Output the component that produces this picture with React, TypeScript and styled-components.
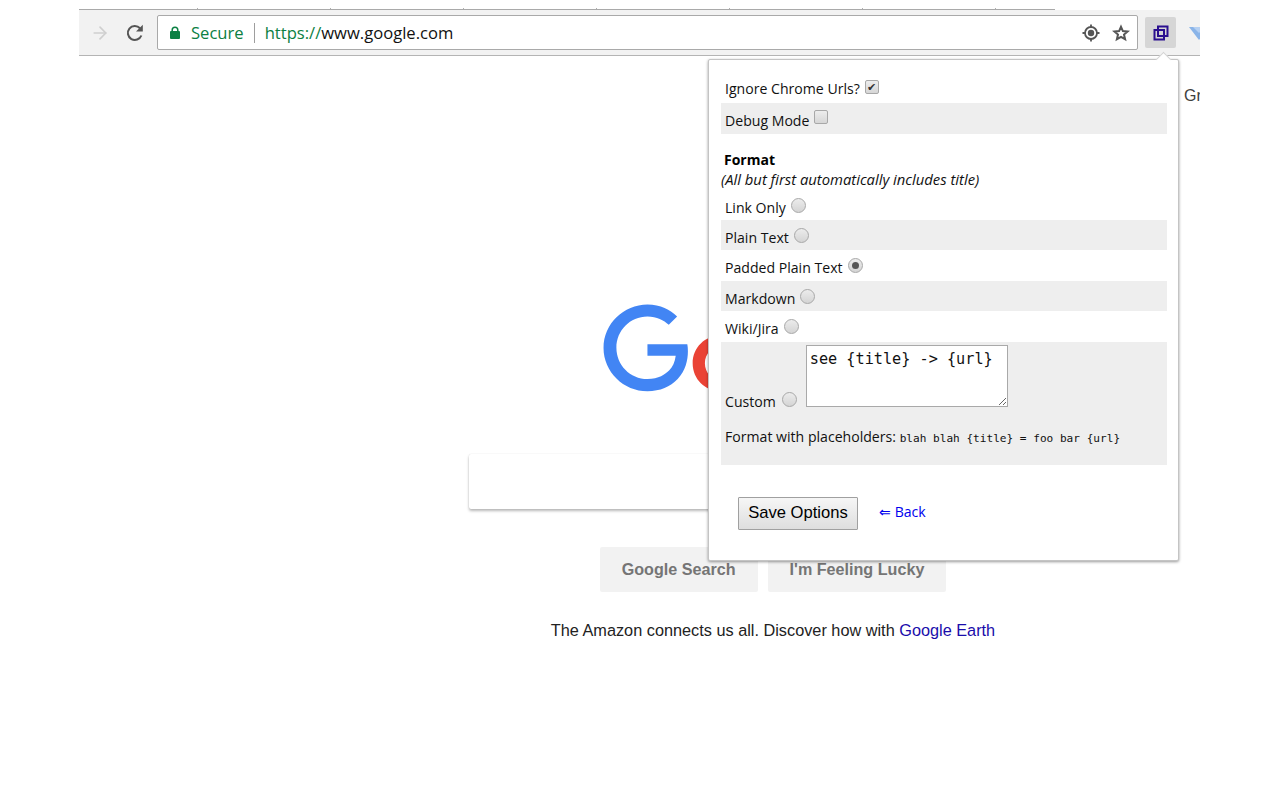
import React from 'react';
import styled, { createGlobalStyle } from 'styled-components';
import { ArrowRight } from 'lucide-react';

const GlobalStyle = createGlobalStyle`
  html, body {
    margin: 0;
    padding: 0;
    background: #ffffff;
    overflow: hidden;
  }
`;

const uiFont = `"Open Sans", "Noto Sans", sans-serif`;
const monoFont = `"DejaVu Sans Mono", "Liberation Mono", monospace`;

const Frame = styled.div`
  position: relative;
  width: 1121px;
  height: 800px;
  margin-left: 79px;
  overflow: hidden;
  background: #ffffff;
  font-family: "Liberation Sans", Arial, sans-serif;
`;

const TabStrip = styled.div`
  width: 976px;
  height: 10px;
  border-bottom: 1px solid #a9a9a9;
  display: flex;
  align-items: flex-end;
  padding-left: 118px;
  gap: 132px;
  box-sizing: border-box;
`;

const TabTick = styled.span`
  width: 1px;
  height: 1px;
  background: #b0b0b0;
`;

const Toolbar = styled.div`
  height: 46px;
  background: #f2f2f2;
  border-bottom: 1px solid #b4b4b4;
  box-sizing: border-box;
  display: flex;
  align-items: center;
`;

const NavButton = styled.div`
  width: 35px;
  height: 32px;
  margin-left: 3px;
  margin-right: -3px;
  display: flex;
  align-items: center;
  justify-content: center;
  flex: none;
`;

const Omnibox = styled.div`
  width: 981px;
  height: 35px;
  flex: none;
  margin-left: 8px;
  box-sizing: border-box;
  background: #ffffff;
  border: 1px solid #a9a9a9;
  border-radius: 2px;
  display: flex;
  align-items: center;
  padding: 0 7px 0 11px;
  font-family: ${uiFont};
  font-size: 16.6px;
`;

const SecureLabel = styled.span`
  color: #0b8043;
  margin-left: 10px;
`;

const Divider = styled.span`
  width: 1px;
  height: 20px;
  background: #9e9e9e;
  margin: 0 10px 0 10px;
`;

const Scheme = styled.span`
  color: #0b8043;
`;

const Host = styled.span`
  color: #111111;
`;

const OmniIcons = styled.div`
  margin-left: auto;
  display: flex;
  align-items: center;
  gap: 12px;
`;

const ExtensionButton = styled.div`
  width: 31px;
  height: 31px;
  flex: none;
  margin-left: 7px;
  border-radius: 2px;
  background: #d6d6d6;
  display: flex;
  align-items: center;
  justify-content: center;
`;

const GemSlot = styled.div`
  margin-left: 13px;
  display: flex;
  align-items: center;
`;

const GooglePage = styled.main`
  display: flex;
  flex-direction: column;
  align-items: center;
  width: 854px;
  margin-left: 267px;
`;

const Logo = styled.svg`
  width: 146px;
  height: 88px;
  margin-top: 248px;
  align-self: flex-start;
  margin-left: 257px;
`;

const SearchBox = styled.div`
  width: 608px;
  height: 55px;
  margin-top: 62px;
  background: #ffffff;
  border-radius: 2px;
  box-shadow: 0 2px 3px rgba(0, 0, 0, 0.28), 0 0 1px rgba(0, 0, 0, 0.16);
`;

const SearchButtons = styled.div`
  display: flex;
  gap: 10px;
  margin-top: 38px;
`;

const SearchButton = styled.div`
  height: 45px;
  padding: 0 22px;
  display: flex;
  align-items: center;
  background: #f2f2f2;
  border-radius: 2px;
  color: #757575;
  font-size: 16.15px;
  font-weight: bold;
`;

const Doodle = styled.p`
  margin: 28px 0 0;
  font-size: 16.3px;
  line-height: 20px;
  color: #222222;
`;

const DoodleLink = styled.a`
  color: #1a0dab;
`;

const CornerLink = styled.span`
  position: absolute;
  left: 1105px;
  top: 87px;
  font-size: 16px;
  color: #404040;
`;

const Popup = styled.div`
  position: absolute;
  left: 629px;
  top: 59px;
  width: 471px;
  height: 502px;
  box-sizing: border-box;
  padding: 10px 11px 0 12px;
  background: #ffffff;
  border: 1px solid #c4c4c4;
  border-radius: 2px;
  box-shadow: 0 1px 3px rgba(0, 0, 0, 0.4);
  font-family: ${uiFont};
  font-size: 14.1px;
  color: #111111;

  &::before {
    content: '';
    position: absolute;
    right: 9px;
    top: -6px;
    width: 10px;
    height: 10px;
    background: #ffffff;
    border-left: 1px solid #d4d4d4;
    border-top: 1px solid #d4d4d4;
    transform: rotate(45deg);
  }
`;

const OptionRow = styled.label<{ $shaded?: boolean; $height: number }>`
  display: flex;
  align-items: center;
  gap: 5px;
  height: ${(p) => p.$height}px;
  box-sizing: border-box;
  padding: 4px 0 0 4px;
  background: ${(p) => (p.$shaded ? '#eeeeee' : 'transparent')};
`;

const Check = styled.input<{ $lift: number }>`
  appearance: none;
  width: 14px;
  height: 14px;
  margin: ${(p) => -p.$lift}px 0 0;
  box-sizing: border-box;
  border: 1px solid #a8a8a8;
  border-radius: 2px;
  background: linear-gradient(#ededed, #d6d6d6);
  display: grid;
  place-items: center;

  &:checked::after {
    content: '✔';
    font-size: 11px;
    line-height: 12px;
    color: #333333;
  }
`;

const Radio = styled.input`
  appearance: none;
  width: 15px;
  height: 15px;
  margin: -4px 0 0;
  box-sizing: border-box;
  border: 1px solid #a8a8a8;
  border-radius: 50%;
  background: linear-gradient(#ececec, #d4d4d4);
  display: grid;
  place-items: center;

  &:checked::after {
    content: '';
    width: 7px;
    height: 7px;
    border-radius: 50%;
    background: #555555;
  }
`;

const FormatHeading = styled.div`
  margin: 16px 0 0 3px;
  font-size: 14px;
  font-weight: bold;
  line-height: 20px;
  color: #000000;
`;

const FormatNote = styled.div`
  margin: -1px 0 1px;
  font-style: italic;
  font-size: 14.8px;
  line-height: 20px;
`;

const CustomBlock = styled.div`
  height: 123px;
  background: #eeeeee;
  padding: 3px 0 0 4px;
  box-sizing: border-box;
`;

const CustomLine = styled.label`
  display: flex;
  align-items: flex-end;
  gap: 6px;
`;

const CustomRadio = styled(Radio)`
  margin: 0 1px 0 0;
`;

const CustomLabel = styled.span`
  line-height: 19px;
  margin-bottom: -4px;
`;

const Template = styled.textarea`
  width: 202px;
  height: 62px;
  box-sizing: border-box;
  margin: 0 0 0 2px;
  padding: 4px 3px 0;
  border: 1px solid #a9a9a9;
  border-radius: 0;
  background: #ffffff;
  outline: none;
  font-family: ${monoFont};
  font-size: 15.2px;
  line-height: 19px;
  color: #111111;
  resize: both;
`;

const PlaceholderHelp = styled.div`
  margin-top: 20px;
  line-height: 20px;
`;

const PlaceholderCode = styled.code`
  font-family: ${monoFont};
  font-size: 11.1px;
`;

const Actions = styled.div`
  display: flex;
  align-items: flex-start;
  gap: 21px;
  margin: 32px 0 0 17px;
`;

const SaveButton = styled.button`
  width: 120px;
  height: 33px;
  padding: 0 0 1px;
  border: 1px solid #a0a0a0;
  border-radius: 1px;
  background: linear-gradient(#f6f6f6, #dedede);
  font-family: "Liberation Sans", Arial, sans-serif;
  font-size: 16.6px;
  color: #000000;
`;

const BackLink = styled.a`
  margin-top: 5px;
  color: #0000ee;
  text-decoration: none;
`;

const ReloadIcon = () => (
  <svg width="20" height="20" viewBox="0 0 20 20" fill="none">
    <path d="M16.4 12.5A7 7 0 1 1 15 5.2" stroke="#555555" strokeWidth="2" />
    <path d="M17.8 1.8V8.6H11z" fill="#555555" />
  </svg>
);

const LockIcon = () => (
  <svg width="12" height="13" viewBox="0 0 12 13" fill="none">
    <path d="M3.2 6V4a2.8 2.8 0 0 1 5.6 0v2" stroke="#0b8043" strokeWidth="1.5" />
    <rect x="1" y="5" width="10" height="8" rx="1" fill="#0b8043" />
  </svg>
);

const TargetIcon = () => (
  <svg width="18" height="18" viewBox="0 0 18 18" fill="none" stroke="#555555" strokeWidth="1.8">
    <circle cx="9" cy="9" r="6" />
    <circle cx="9" cy="9" r="3.2" fill="#555555" stroke="none" />
    <path d="M9 0.5V3M9 15v2.5M0.5 9H3M15 9h2.5" />
  </svg>
);

const StarIcon = () => (
  <svg width="18" height="18" viewBox="0 0 18 18" fill="none" stroke="#555555" strokeWidth="2" strokeLinejoin="miter">
    <path d="M9 2.8l1.9 4.3 4.7.4-3.6 3.1 1.1 4.6L9 12.8l-4.1 2.4L6 10.6 2.4 7.5l4.7-.4z" />
  </svg>
);

const CopyIcon = () => (
  <svg width="16" height="16" viewBox="0 0 16 16" fill="none" stroke="#2a0f8f" strokeWidth="2">
    <rect x="5" y="1.5" width="9.5" height="9.5" />
    <rect x="1.5" y="5" width="9.5" height="9.5" />
  </svg>
);

const GemIcon = () => (
  <svg width="20" height="16" viewBox="0 0 20 16">
    <path d="M0 2h20l-10 13z" fill="#8ab4e8" />
    <path d="M4 2h12l-6 6z" fill="#b5d0f2" />
  </svg>
);

const GoogleMark = () => (
  <Logo viewBox="0 0 116 70">
    <path
      fill="#4285f4"
      d="M35.29 41.41V32H67c.31 1.64.47 3.58.47 5.68 0 7.06-1.93 15.79-8.15 22.01-6.05 6.3-13.78 9.66-24.02 9.66C16.32 69.35.36 53.89.36 34.91.36 15.93 16.32.47 35.3.47c10.5 0 17.98 4.12 23.6 9.49l-6.64 6.64c-4.03-3.78-9.49-6.72-16.97-6.72-13.86 0-24.7 11.17-24.7 24.89 0 13.72 10.84 24.89 24.7 24.89 8.99 0 14.11-3.61 17.39-6.89 2.66-2.66 4.41-6.46 5.1-11.65l-22.49.01z"
    />
    <path
      fill="#ea4335"
      d="M115.75 47.18c0 12.77-9.99 22.18-22.25 22.18s-22.25-9.41-22.25-22.18C71.25 34.32 81.24 25 93.5 25s22.25 9.32 22.25 22.18zm-9.74 0c0-7.98-5.79-13.44-12.51-13.44S80.99 39.2 80.99 47.18c0 7.9 5.79 13.44 12.51 13.44s12.51-5.55 12.51-13.44z"
    />
  </Logo>
);

const formats = [
  { label: 'Link Only', height: 30 },
  { label: 'Plain Text', height: 30, shaded: true },
  { label: 'Padded Plain Text', height: 31, checked: true },
  { label: 'Markdown', height: 30, shaded: true },
  { label: 'Wiki/Jira', height: 31 },
];

const App: React.FC = () => {
  return (
    <Frame>
      <GlobalStyle />
      <TabStrip>
        {[0, 1, 2, 3, 4, 5, 6].map((t) => (
          <TabTick key={t} />
        ))}
      </TabStrip>
      <Toolbar>
        <NavButton>
          <ArrowRight size={20} color="#cfcfcf" strokeWidth={2} />
        </NavButton>
        <NavButton>
          <ReloadIcon />
        </NavButton>
        <Omnibox>
          <LockIcon />
          <SecureLabel>Secure</SecureLabel>
          <Divider />
          <Scheme>https://</Scheme>
          <Host>www.google.com</Host>
          <OmniIcons>
            <TargetIcon />
            <StarIcon />
          </OmniIcons>
        </Omnibox>
        <ExtensionButton>
          <CopyIcon />
        </ExtensionButton>
        <GemSlot>
          <GemIcon />
        </GemSlot>
      </Toolbar>

      <GooglePage>
        <GoogleMark />
        <SearchBox />
        <SearchButtons>
          <SearchButton>Google Search</SearchButton>
          <SearchButton>I'm Feeling Lucky</SearchButton>
        </SearchButtons>
        <Doodle>
          The Amazon connects us all. Discover how with <DoodleLink>Google Earth</DoodleLink>
        </Doodle>
      </GooglePage>
      <CornerLink>Gr</CornerLink>

      <Popup>
        <OptionRow $height={33}>
          Ignore Chrome Urls? <Check type="checkbox" $lift={3} defaultChecked />
        </OptionRow>
        <OptionRow $height={31} $shaded>
          Debug Mode <Check type="checkbox" $lift={7} />
        </OptionRow>
        <FormatHeading>Format</FormatHeading>
        <FormatNote>(All but first automatically includes title)</FormatNote>
        {formats.map((f) => (
          <OptionRow key={f.label} $height={f.height} $shaded={f.shaded}>
            {f.label} <Radio type="radio" name="format" defaultChecked={f.checked} />
          </OptionRow>
        ))}
        <CustomBlock>
          <CustomLine>
            <CustomLabel>Custom</CustomLabel>
            <CustomRadio type="radio" name="format" />
            <Template defaultValue="see {title} -> {url}" />
          </CustomLine>
          <PlaceholderHelp>
            Format with placeholders: <PlaceholderCode>blah blah {'{title}'} = foo bar {'{url}'}</PlaceholderCode>
          </PlaceholderHelp>
        </CustomBlock>
        <Actions>
          <SaveButton>Save Options</SaveButton>
          <BackLink href="#">⇐ Back</BackLink>
        </Actions>
      </Popup>
    </Frame>
  );
};

export default App;
